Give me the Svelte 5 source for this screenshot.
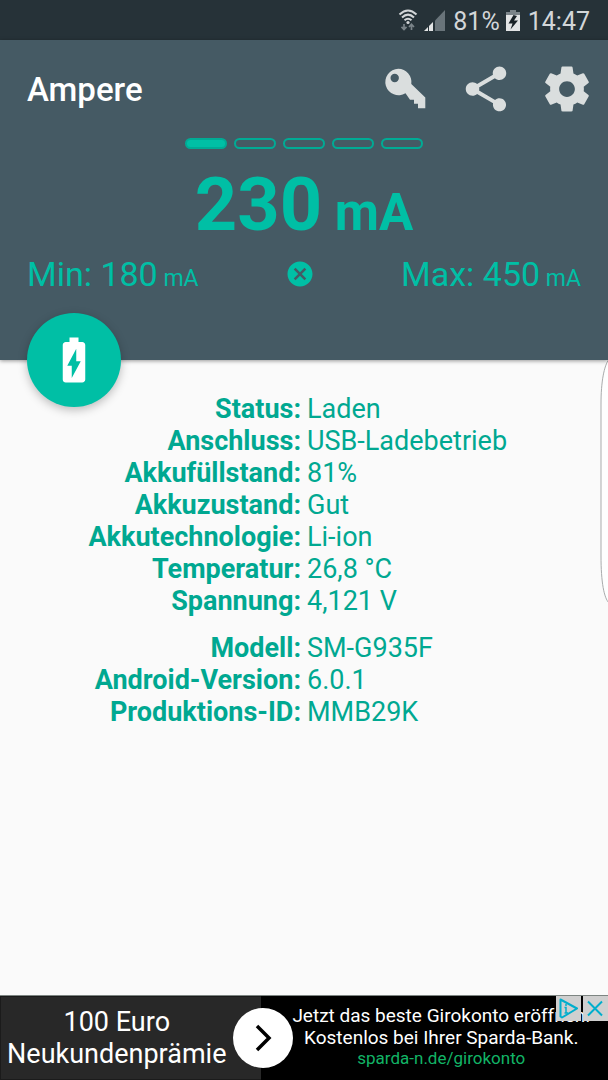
<script>
  const level = 1;
  const bars = [1, 2, 3, 4, 5];

  const groups = [
    [
      { label: "Status", value: "Laden" },
      { label: "Anschluss", value: "USB-Ladebetrieb" },
      { label: "Akkufüllstand", value: "81%" },
      { label: "Akkuzustand", value: "Gut" },
      { label: "Akkutechnologie", value: "Li-ion" },
      { label: "Temperatur", value: "26,8 °C" },
      { label: "Spannung", value: "4,121 V" },
    ],
    [
      { label: "Modell", value: "SM-G935F" },
      { label: "Android-Version", value: "6.0.1" },
      { label: "Produktions-ID", value: "MMB29K" },
    ],
  ];
</script>

<div class="screen">
  <div class="statusbar">
    <svg class="wifi" viewBox="0 0 20 22" width="20" height="22">
      <g fill="none" stroke="#d3d6d8" stroke-width="2">
        <path d="M1.500 5.500Q10 -2.500 18.500 5.500" />
        <path d="M4 8.500Q10 2.800 16 8.500" />
        <path d="M6.500 11.300Q10 8.200 13.500 11.300" />
      </g>
      <circle cx="10" cy="13.500" r="1.600" fill="#d3d6d8" />
      <path d="M6 15v5M3.500 17.800L6 20.500l2.500-2.700M13.500 21v-5M11 18l2.500-2.700L16 18" fill="none" stroke="#7b8489" stroke-width="1.700" />
    </svg>
    <svg class="signal" viewBox="0 0 21 21" width="21" height="21">
      <path d="M21 0v21H11V10.500z" fill="#69747a" />
      <path d="M0 21l4-4v4zM5 21v-5l4-4v9z" fill="#e2e4e5" />
    </svg>
    <span>81%</span>
    <svg class="battery" viewBox="0 0 14 21" width="14" height="21">
      <path d="M4 0h6v2h4v5H0V2h4z" fill="#7b8489" />
      <path d="M0 5h14v16H0z" fill="#e2e4e5" />
      <path d="M7.500 5L2.500 13.500h4L4.500 19.500l7.500-9H8L11 6z" fill="#182126" />
    </svg>
    <span>14:47</span>
  </div>

  <header>
    <div class="toolbar">
      <h1>Ampere</h1>
      <button aria-label="Pro-Version">
        <svg viewBox="0 0 54 54">
          <path fill-rule="evenodd" d="M20.300 6.800a13.200 13.200 0 0 1 13 15.200L47.300 35.500V46.300H40V41.700H36V37.700H32L27.500 31.200A13.200 13.200 0 1 1 20.300 6.800zM16.700 11.800a4.200 4.200 0 1 0 0 8.400 4.200 4.200 0 1 0 0-8.400z" />
        </svg>
      </button>
      <button aria-label="Teilen">
        <svg viewBox="0 0 24 24">
          <path d="M18 16.080c-.76 0-1.440.3-1.960.77L8.910 12.700c.05-.23.09-.46.09-.7s-.04-.47-.09-.7l7.050-4.110c.54.5 1.250.81 2.040.81 1.660 0 3-1.340 3-3s-1.340-3-3-3-3 1.340-3 3c0 .24.04.47.09.7L8.040 9.810C7.500 9.310 6.790 9 6 9c-1.660 0-3 1.340-3 3s1.340 3 3 3c.79 0 1.500-.31 2.040-.81l7.120 4.160c-.05.21-.08.43-.08.65 0 1.610 1.310 2.920 2.920 2.920s2.920-1.310 2.920-2.920-1.310-2.920-2.920-2.920z" />
        </svg>
      </button>
      <button aria-label="Einstellungen">
        <svg viewBox="0 0 24 24">
          <path d="M19.430 12.980c.04-.32.07-.64.07-.98s-.03-.66-.07-.98l2.110-1.650c.19-.15.24-.42.12-.64l-2-3.460c-.12-.22-.39-.3-.61-.22l-2.490 1c-.52-.4-1.080-.73-1.690-.98l-.38-2.650C14.460 2.180 14.250 2 14 2h-4c-.25 0-.46.18-.49.42l-.38 2.650c-.61.25-1.170.59-1.690.98l-2.490-1c-.23-.09-.49 0-.61.22l-2 3.460c-.13.22-.07.49.12.64l2.110 1.650c-.04.32-.07.65-.07.98s.03.66.07.98l-2.110 1.650c-.19.15-.24.42-.12.64l2 3.460c.12.22.39.3.61.22l2.490-1c.52.4 1.080.73 1.690.98l.38 2.650c.03.24.24.42.49.42h4c.25 0 .46-.18.49-.42l.38-2.650c.61-.25 1.170-.59 1.690-.98l2.490 1c.23.09.49 0 .61-.22l2-3.460c.12-.22.07-.49-.12-.64l-2.110-1.650zM12 15.500c-1.930 0-3.500-1.570-3.500-3.500s1.570-3.500 3.500-3.500 3.500 1.570 3.500 3.500-1.570 3.500-3.500 3.500z" />
        </svg>
      </button>
    </div>

    <div class="bars">
      {#each bars as bar}
        <span class="bar" class:filled={bar <= level}></span>
      {/each}
    </div>

    <div class="current">230<small>{" mA"}</small></div>

    <div class="range">
      <span>Min: 180<small>{" mA"}</small></span>
      <button class="reset" aria-label="Zurücksetzen">
        <svg viewBox="0 0 24 24">
          <path d="M12 2C6.470 2 2 6.470 2 12s4.470 10 10 10 10-4.470 10-10S17.530 2 12 2zm5 13.590L15.590 17 12 13.410 8.410 17 7 15.590 10.590 12 7 8.410 8.410 7 12 10.590 15.590 7 17 8.410 13.410 12 17 15.590z" />
        </svg>
      </button>
      <span>Max: 450<small>{" mA"}</small></span>
    </div>

    <button class="fab" aria-label="Akku">
      <svg viewBox="0 0 24 24">
        <path d="M15.670 4H14V2h-4v2H8.330C7.600 4 7 4.600 7 5.330v15.330C7 21.400 7.600 22 8.330 22h7.330c.74 0 1.340-.6 1.340-1.330V5.330C17 4.600 16.400 4 15.670 4zM11 20v-5.500H9L13 7v5.500h2L11 20z" />
      </svg>
    </button>
  </header>

  <main>
    {#each groups as rows}
      <table>
        <tbody>
          {#each rows as row}
            <tr>
              <th scope="row">{row.label}:</th>
              <td>{row.value}</td>
            </tr>
          {/each}
        </tbody>
      </table>
    {/each}
    <svg class="edge" viewBox="0 0 8 244" width="8" height="244">
      <path d="M9 -1C4 6 1 22 1 44V196C1 222 4 238 9 243" fill="#fefefe" stroke="#a9abac" />
    </svg>
  </main>

  <aside class="ad">
    <a href="#girokonto">
      <span class="offer">100 Euro<br />Neukundenprämie</span>
      <span class="pitch">
        <span>Jetzt das beste Girokonto eröffnen!</span>
        <span>Kostenlos bei Ihrer Sparda-Bank.</span>
        <span class="url">sparda-n.de/girokonto</span>
      </span>
      <span class="arrow">
        <svg viewBox="0 0 60 60">
          <path d="M24 18l12 12-12 12" fill="none" stroke="#000" stroke-width="3.500" />
        </svg>
      </span>
    </a>
    <div class="choices">
      <button aria-label="AdChoices">
        <svg viewBox="0 0 25 25">
          <path d="M4.500 3.500L21 12.500 6 21.500 4.500 20.500z" fill="none" stroke="#00aecd" stroke-width="2" stroke-linejoin="round" />
          <path d="M10 8v2M8.500 11.500H10V17M8.500 17h3.500" fill="none" stroke="#00aecd" stroke-width="1.500" />
        </svg>
      </button>
      <button aria-label="Anzeige schließen">
        <svg viewBox="0 0 25 25">
          <path d="M5 5.500l14 14M19 5.500l-14 14" fill="none" stroke="#00aecd" stroke-width="2" />
        </svg>
      </button>
    </div>
  </aside>
</div>

<style>
  :global(body) {
    margin: 0;
    background: #fafafa;
  }

  .screen {
    min-height: 100vh;
    display: flex;
    flex-direction: column;
    font-family: Roboto, sans-serif;
  }

  button {
    padding: 0;
    border: 0;
    background: none;
    cursor: pointer;
  }

  svg {
    display: block;
  }

  .statusbar {
    height: 40px;
    padding: 0 18px;
    display: flex;
    align-items: center;
    justify-content: flex-end;
    gap: 6px;
    background: #263238;
    color: #d3d6d8;
    font-size: 25px;
    line-height: 40px;
  }

  .statusbar span {
    padding-top: 4px;
  }

  .signal,
  .battery {
    margin-right: 2px;
  }

  header {
    position: relative;
    z-index: 1;
    height: 320px;
    box-sizing: border-box;
    background: #455a64;
    color: #00bfa5;
    box-shadow: 0 1px 4px rgba(0, 0, 0, 0.4);
  }

  .toolbar {
    height: 98px;
    padding: 0 14px 0 27px;
    display: flex;
    align-items: center;
    gap: 27px;
  }

  h1 {
    flex: 1;
    margin: 0;
    color: #fff;
    font-size: 33px;
    font-weight: 500;
  }

  .toolbar svg {
    width: 54px;
    height: 54px;
    fill: #dadede;
  }

  .bars {
    display: flex;
    justify-content: center;
    gap: 7px;
  }

  .bar {
    width: 42px;
    height: 11px;
    box-sizing: border-box;
    border: 2px solid #00ab95;
    border-radius: 6px;
  }

  .bar.filled {
    background: #00bfa5;
  }

  .current {
    padding-top: 16px;
    text-align: center;
    font-size: 74px;
    font-weight: 700;
    line-height: 80px;
  }

  .current small {
    font-size: 51px;
  }

  .current,
  .range span {
    white-space: nowrap;
  }

  .range {
    padding: 1px 27px 0;
    display: flex;
    align-items: center;
    justify-content: space-between;
    font-size: 34px;
    line-height: 40px;
  }

  .range small {
    font-size: 23px;
    line-height: 1;
  }

  .reset svg {
    width: 30px;
    height: 30px;
    fill: #00bfa5;
  }

  .fab {
    position: absolute;
    left: 27px;
    bottom: -47px;
    width: 94px;
    height: 94px;
    display: grid;
    place-items: center;
    border-radius: 50%;
    background: #00bfa5;
    box-shadow: 0 3px 10px rgba(0, 0, 0, 0.25);
  }

  .fab svg {
    width: 54px;
    height: 54px;
    fill: #fff;
  }

  main {
    position: relative;
    flex: 1;
    padding-top: 33px;
    display: flex;
    flex-direction: column;
    gap: 15px;
  }

  table {
    width: 100%;
    table-layout: fixed;
    border-collapse: collapse;
    color: #00a891;
    font-size: 27px;
    line-height: 32px;
  }

  th {
    padding: 0 3px 0 0;
    text-align: right;
    font-weight: 700;
  }

  td {
    padding: 0 0 0 3px;
  }

  .edge {
    position: absolute;
    top: 0;
    right: 0;
  }

  .ad {
    position: relative;
    border-top: 1px solid #7d8582;
    background: #000;
  }

  .ad a {
    position: relative;
    height: 84px;
    display: grid;
    grid-template-columns: 3fr 4fr;
    color: #fff;
    text-align: center;
    text-decoration: none;
  }

  .offer {
    padding: 9px 28px 0 0;
    border: 1px solid #1b1b1b;
    border-width: 1px 0 1px 1px;
    background: #282828;
    font-size: 27px;
    line-height: 32px;
  }

  .pitch {
    padding-top: 9px;
    padding-left: 14px;
    display: flex;
    flex-direction: column;
    align-items: center;
    font-size: 19px;
    line-height: 22px;
    white-space: nowrap;
  }

  .url {
    color: #12b466;
    font-size: 17px;
    line-height: 18px;
  }

  .arrow {
    position: absolute;
    top: 12px;
    left: 233px;
    width: 60px;
    height: 60px;
    border-radius: 50%;
    background: #fff;
  }

  .choices {
    position: absolute;
    top: 0;
    right: 0;
    display: flex;
    gap: 2px;
  }

  .choices button {
    width: 25px;
    height: 25px;
    background: #cfcfcf;
  }
</style>
